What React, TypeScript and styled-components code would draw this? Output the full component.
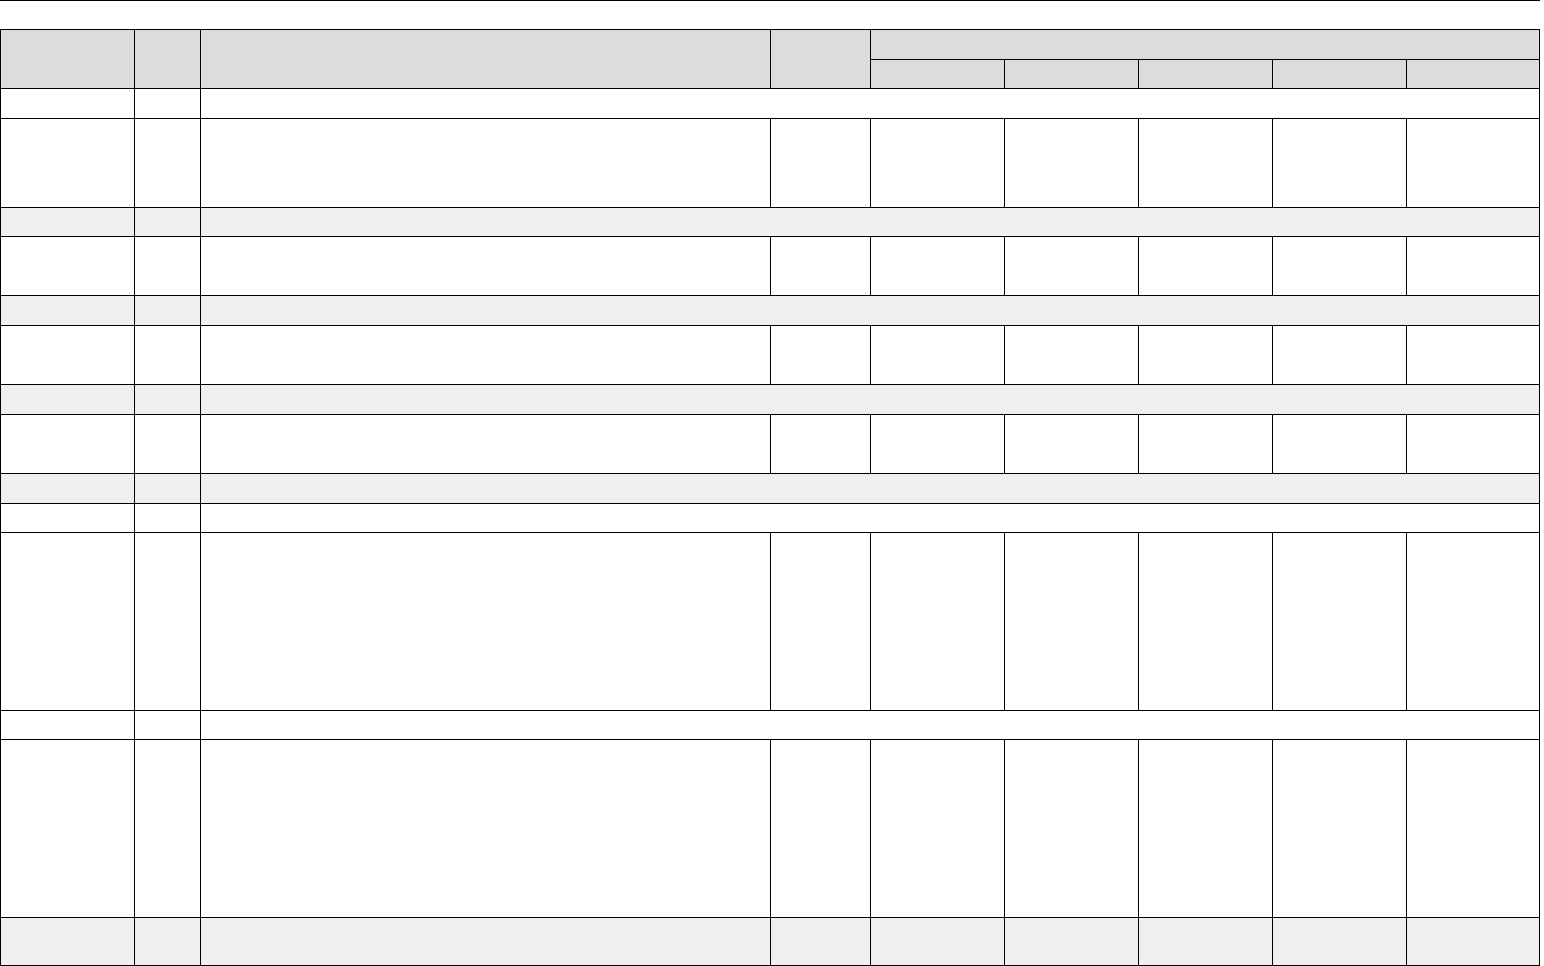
import React from "react";
import styled, { createGlobalStyle } from "styled-components";

const Global = createGlobalStyle`
  html, body { margin: 0; padding: 0; background: #fff; }
  body { font-family: "Liberation Sans", Arial, sans-serif; }
`;

const Page = styled.div`
  width: 1540px;
`;

const Rule = styled.div`
  height: 1px;
  background: #000;
  margin-bottom: 28px;
`;

const Grid = styled.div`
  display: grid;
  grid-template-columns: 133px 65px 569px 99px 133px 133px 133px 133px 132px;
  grid-template-rows: 29px 28px 29px 88px 28px 58px 29px 58px 29px 58px 29px 28px 177px 28px 177px 47px;
  gap: 1px;
  padding: 1px;
  background: #000;
`;

type Tone = "head" | "shade" | "plain";

const Cell = styled.div<{ $tone?: Tone; $cols?: number; $rows?: number }>`
  background: ${(p) =>
    p.$tone === "head" ? "#dcdcdc" : p.$tone === "shade" ? "#efefef" : "#ffffff"};
  grid-column: span ${(p) => p.$cols ?? 1};
  grid-row: span ${(p) => p.$rows ?? 1};
`;

type RowKind = { kind: "span" | "full"; tone: Tone };

const body: RowKind[] = [
  { kind: "span", tone: "plain" },
  { kind: "full", tone: "plain" },
  { kind: "span", tone: "shade" },
  { kind: "full", tone: "plain" },
  { kind: "span", tone: "shade" },
  { kind: "full", tone: "plain" },
  { kind: "span", tone: "shade" },
  { kind: "full", tone: "plain" },
  { kind: "span", tone: "shade" },
  { kind: "span", tone: "plain" },
  { kind: "full", tone: "plain" },
  { kind: "span", tone: "plain" },
  { kind: "full", tone: "plain" },
  { kind: "full", tone: "shade" },
];

export default function App() {
  return (
    <Page>
      <Global />
      <Rule />
      <Grid>
        <Cell $tone="head" $rows={2} />
        <Cell $tone="head" $rows={2} />
        <Cell $tone="head" $rows={2} />
        <Cell $tone="head" $rows={2} />
        <Cell $tone="head" $cols={5} />
        {[0, 1, 2, 3, 4].map((i) => (
          <Cell key={`h${i}`} $tone="head" />
        ))}
        {body.map((r, ri) =>
          r.kind === "span" ? (
            <React.Fragment key={ri}>
              <Cell $tone={r.tone} />
              <Cell $tone={r.tone} />
              <Cell $tone={r.tone} $cols={7} />
            </React.Fragment>
          ) : (
            <React.Fragment key={ri}>
              {Array.from({ length: 9 }).map((_, ci) => (
                <Cell key={ci} $tone={r.tone} />
              ))}
            </React.Fragment>
          )
        )}
      </Grid>
    </Page>
  );
}
